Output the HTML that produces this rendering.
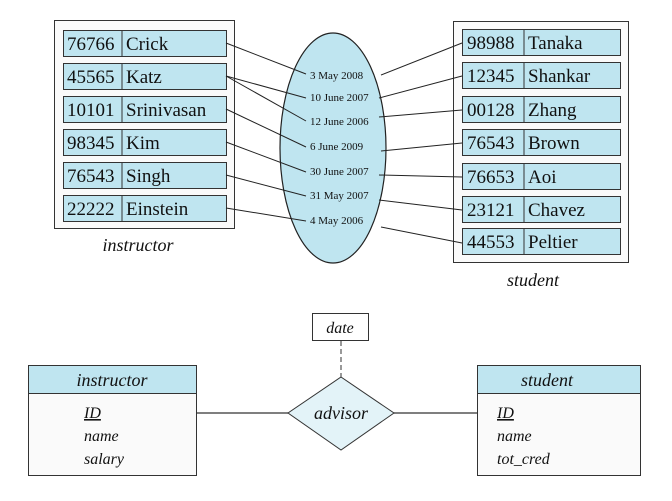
<!DOCTYPE html>
<html><head><meta charset="utf-8"><style>
html,body{margin:0;padding:0;background:#fff;}
svg{display:block;}
text{font-family:"Liberation Serif",serif;fill:#111;}
</style></head><body>
<svg width="672" height="501" viewBox="0 0 672 501" xmlns="http://www.w3.org/2000/svg">
<!-- left box -->
<rect x="54.5" y="20.5" width="180" height="208" fill="#fafafa" stroke="#333" stroke-width="1"/>
<g stroke="#333" stroke-width="1" fill="#bfe5f0">
<rect x="63.5" y="30.5" width="163" height="26"/>
<rect x="63.5" y="63.5" width="163" height="26"/>
<rect x="63.5" y="96.5" width="163" height="26"/>
<rect x="63.5" y="129.5" width="163" height="26"/>
<rect x="63.5" y="162.5" width="163" height="26"/>
<rect x="63.5" y="195.5" width="163" height="26"/>
<line x1="122" y1="30" x2="122" y2="57"/><line x1="122" y1="63" x2="122" y2="90"/>
<line x1="122" y1="96" x2="122" y2="123"/><line x1="122" y1="129" x2="122" y2="156"/>
<line x1="122" y1="162" x2="122" y2="189"/><line x1="122" y1="195" x2="122" y2="222"/>
</g>
<g font-size="19">
<text x="67" y="50">76766</text><text x="126" y="50">Crick</text>
<text x="67" y="83">45565</text><text x="126" y="83">Katz</text>
<text x="67" y="116">10101</text><text x="126" y="116">Srinivasan</text>
<text x="67" y="149">98345</text><text x="126" y="149">Kim</text>
<text x="67" y="182">76543</text><text x="126" y="182">Singh</text>
<text x="67" y="215">22222</text><text x="126" y="215">Einstein</text>
</g>
<text x="138" y="251" font-size="18" font-style="italic" text-anchor="middle">instructor</text>

<!-- right box -->
<rect x="453.5" y="21.5" width="175" height="241" fill="#fafafa" stroke="#333" stroke-width="1"/>
<g stroke="#333" stroke-width="1" fill="#bfe5f0">
<rect x="462.5" y="29.5" width="158" height="26"/>
<rect x="462.5" y="62.5" width="158" height="26"/>
<rect x="462.5" y="96.5" width="158" height="26"/>
<rect x="462.5" y="129.5" width="158" height="26"/>
<rect x="462.5" y="163.5" width="158" height="26"/>
<rect x="462.5" y="196.5" width="158" height="26"/>
<rect x="462.5" y="228.5" width="158" height="26"/>
<line x1="524" y1="29" x2="524" y2="56"/><line x1="524" y1="62" x2="524" y2="89"/>
<line x1="524" y1="96" x2="524" y2="123"/><line x1="524" y1="129" x2="524" y2="156"/>
<line x1="524" y1="163" x2="524" y2="190"/><line x1="524" y1="196" x2="524" y2="223"/>
<line x1="524" y1="228" x2="524" y2="255"/>
</g>
<g font-size="19">
<text x="467" y="49">98988</text><text x="528" y="49">Tanaka</text>
<text x="467" y="82">12345</text><text x="528" y="82">Shankar</text>
<text x="467" y="116">00128</text><text x="528" y="116">Zhang</text>
<text x="467" y="149">76543</text><text x="528" y="149">Brown</text>
<text x="467" y="183">76653</text><text x="528" y="183">Aoi</text>
<text x="467" y="216">23121</text><text x="528" y="216">Chavez</text>
<text x="467" y="248">44553</text><text x="528" y="248">Peltier</text>
</g>
<text x="533" y="286" font-size="18" font-style="italic" text-anchor="middle">student</text>

<!-- ellipse -->
<ellipse cx="333" cy="148" rx="53" ry="115" fill="#bfe5f0" stroke="#222" stroke-width="1.2"/>
<g font-size="11">
<text x="310" y="79">3 May 2008</text>
<text x="310" y="101">10 June 2007</text>
<text x="310" y="125">12 June 2006</text>
<text x="310" y="150">6 June 2009</text>
<text x="310" y="175">30 June 2007</text>
<text x="310" y="199">31 May 2007</text>
<text x="310" y="224">4 May 2006</text>
</g>
<g stroke="#222" stroke-width="1">
<line x1="226" y1="43" x2="306" y2="74"/>
<line x1="226" y1="76" x2="306" y2="98"/>
<line x1="226" y1="76" x2="306" y2="121"/>
<line x1="226" y1="109" x2="306" y2="147"/>
<line x1="226" y1="142" x2="306" y2="172"/>
<line x1="226" y1="175" x2="306" y2="196"/>
<line x1="226" y1="208" x2="306" y2="221"/>
<line x1="381" y1="75" x2="462" y2="43"/>
<line x1="379" y1="98" x2="462" y2="76"/>
<line x1="379" y1="117" x2="462" y2="110"/>
<line x1="381" y1="151" x2="462" y2="143"/>
<line x1="379" y1="175" x2="462" y2="177"/>
<line x1="379" y1="200" x2="462" y2="210"/>
<line x1="381" y1="227" x2="462" y2="243"/>
</g>

<!-- ER diagram -->
<rect x="312.5" y="313.5" width="56" height="27" fill="#fff" stroke="#333"/>
<text x="340" y="333" font-size="16" font-style="italic" text-anchor="middle">date</text>
<line x1="341" y1="341" x2="341" y2="377" stroke="#333" stroke-dasharray="5,3"/>
<line x1="197" y1="413" x2="288" y2="413" stroke="#555" stroke-width="1.5"/>
<line x1="394" y1="413" x2="477" y2="413" stroke="#555" stroke-width="1.5"/>
<polygon points="341,377 394,413 341,450 288,413" fill="#e3f3f8" stroke="#333"/>
<text x="341" y="419" font-size="18" font-style="italic" text-anchor="middle">advisor</text>

<rect x="28.5" y="365.5" width="168" height="110" fill="#fafafa" stroke="#333"/>
<rect x="28.5" y="365.5" width="168" height="28" fill="#bfe5f0" stroke="#333"/>
<text x="112" y="386" font-size="18" font-style="italic" text-anchor="middle">instructor</text>
<g font-size="16" font-style="italic">
<text x="84" y="418" text-decoration="underline">ID</text>
<text x="84" y="441">name</text>
<text x="84" y="464">salary</text>
</g>

<rect x="477.5" y="365.5" width="163" height="110" fill="#fafafa" stroke="#333"/>
<rect x="477.5" y="365.5" width="163" height="28" fill="#bfe5f0" stroke="#333"/>
<text x="547" y="386" font-size="18" font-style="italic" text-anchor="middle">student</text>
<g font-size="16" font-style="italic">
<text x="497" y="418" text-decoration="underline">ID</text>
<text x="497" y="441">name</text>
<text x="497" y="464">tot_cred</text>
</g>
</svg>
</body></html>
